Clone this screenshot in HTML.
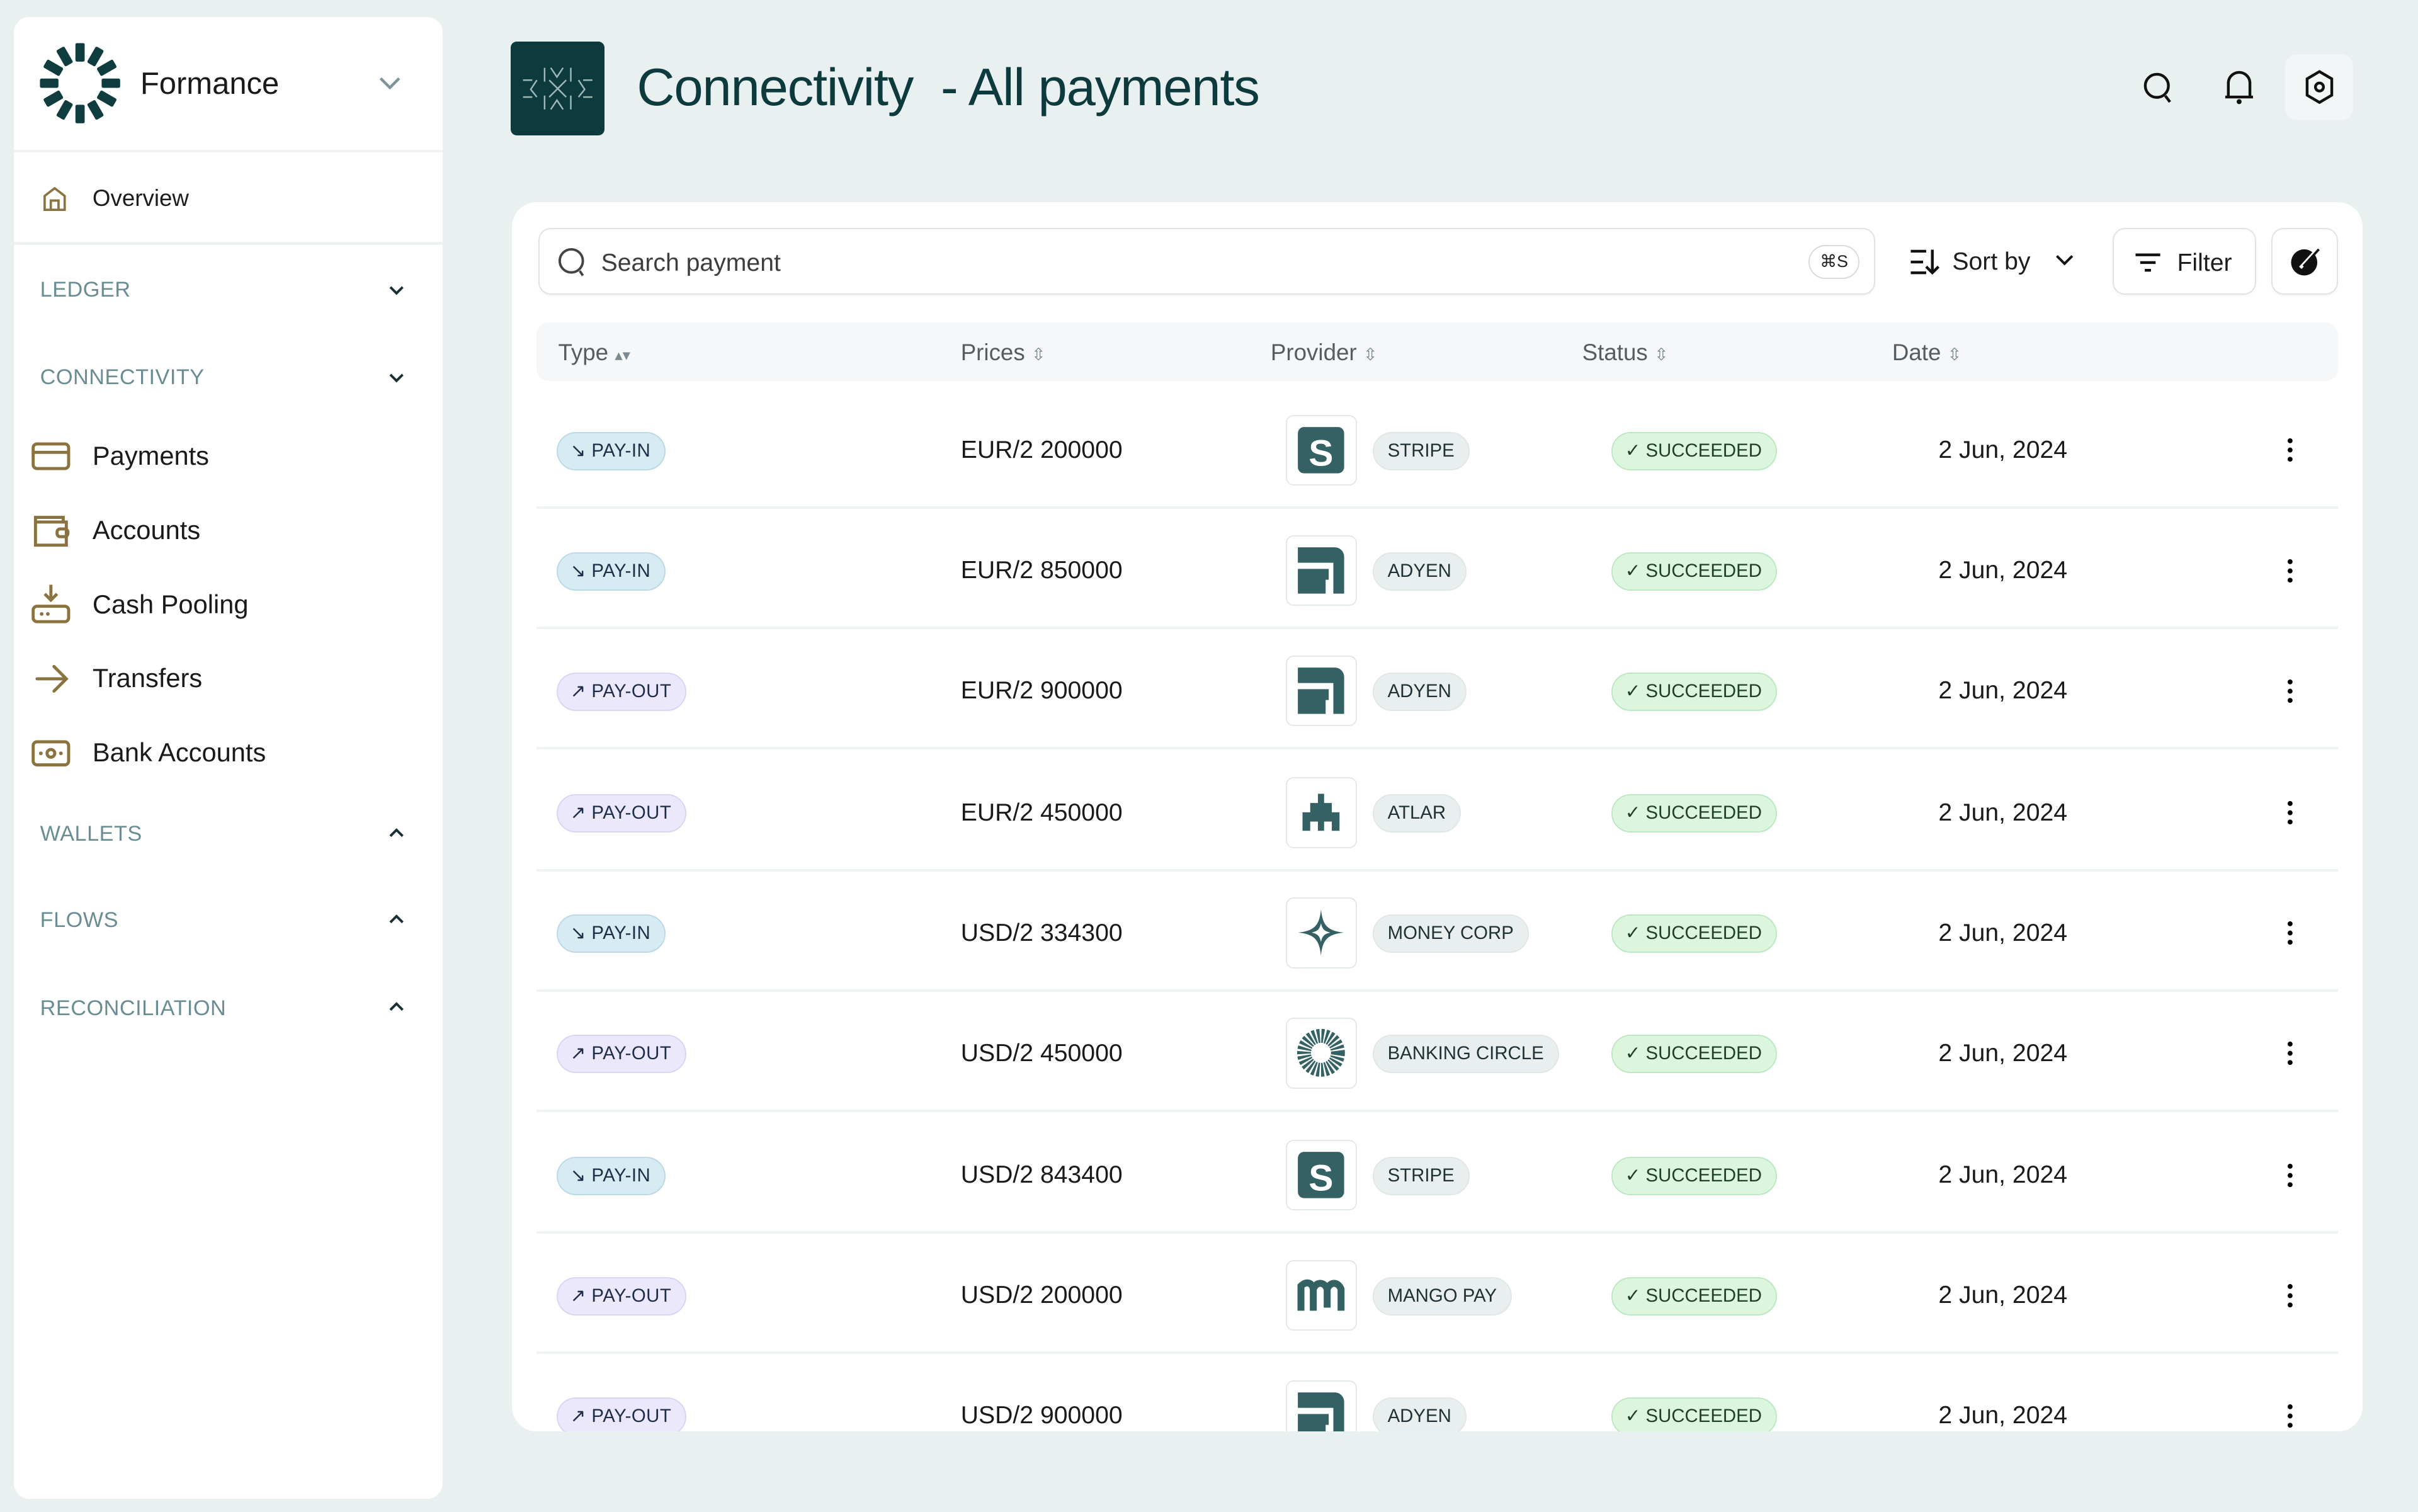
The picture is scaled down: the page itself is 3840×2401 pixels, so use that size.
<!DOCTYPE html>
<html><head><meta charset="utf-8"><style>
*{box-sizing:border-box;margin:0;padding:0}
html,body{width:3840px;height:2401px;overflow:hidden;background:#e8f0f0}
#z{zoom:2.44898;width:1568px;height:981px;position:relative;font-family:"Liberation Sans",sans-serif;color:#1d1d1f}
.a{position:absolute}
.side{left:9px;top:11px;width:278px;height:961px;background:#fff;border-radius:10px}
.hr{position:absolute;left:0;right:0;height:2px;background:#eef2f3}
.sec{position:absolute;left:17px;font-size:14px;color:#6a8d93;letter-spacing:.2px}
.chev{position:absolute;left:242px;width:12px;height:8px}
.item{position:absolute;left:51px;font-size:17px;color:#1a1a1a}
.ic{position:absolute;left:11px}
.card{left:332px;top:131px;width:1200px;height:797px;background:#fff;border-radius:16px;overflow:hidden}
.btn{position:absolute;border:1px solid #dde3e6;border-radius:8px;background:#fff;box-shadow:0 1px 2px rgba(0,0,0,.04)}
.th{position:absolute;top:11px;font-size:15px;color:#555d63}
.row{position:absolute;left:16px;width:1168px;height:78px;border-bottom:2px solid #f0f3f4}
.bdg{position:absolute;left:13px;top:28px;height:25px;border-radius:13px;font-size:12px;padding:0 9px 0 8px;line-height:23px;color:#1e2d48;letter-spacing:.2px}
.in{background:#d7ebf2;border:1px solid #bcd9e4}
.out{background:#ebe8fb;border:1px solid #dad5f3}
.pr{position:absolute;left:275px;top:31px;font-size:16px;color:#1a1a1a}
.lg{position:absolute;left:486px;top:17px;width:46px;height:46px;border:1px solid #e3e8ea;border-radius:5px;background:#fff}
.pv{position:absolute;left:542px;top:28px;height:25px;border-radius:13px;background:#e9efef;border:1px solid #e0e7e7;font-size:12px;line-height:23px;padding:0 9px;color:#1f3135}
.st{position:absolute;left:697px;top:28px;height:25px;border-radius:13px;background:#dcf6de;border:1px solid #bde9c2;font-size:12px;line-height:23px;padding:0 9px 0 8px;color:#1e3f28}
.dt{position:absolute;left:909px;top:31px;font-size:16px;color:#1a1a1a}
.dots{position:absolute;left:1135px;top:32px;width:4px;height:16px}
</style></head><body><div id="z">
<div class="a side">
 <svg class="a" style="left:16px;top:16px" width="54" height="54" viewBox="-27 -27 54 54">
  <g fill="#0f3d3f">
  <rect x="-3" y="-26" width="6" height="12" rx="1" transform="rotate(0)"/><rect x="-3" y="-26" width="6" height="12" rx="1" transform="rotate(30)"/><rect x="-3" y="-26" width="6" height="12" rx="1" transform="rotate(60)"/><rect x="-3" y="-26" width="6" height="12" rx="1" transform="rotate(90)"/><rect x="-3" y="-26" width="6" height="12" rx="1" transform="rotate(120)"/><rect x="-3" y="-26" width="6" height="12" rx="1" transform="rotate(150)"/><rect x="-3" y="-26" width="6" height="12" rx="1" transform="rotate(180)"/><rect x="-3" y="-26" width="6" height="12" rx="1" transform="rotate(210)"/><rect x="-3" y="-26" width="6" height="12" rx="1" transform="rotate(240)"/><rect x="-3" y="-26" width="6" height="12" rx="1" transform="rotate(270)"/><rect x="-3" y="-26" width="6" height="12" rx="1" transform="rotate(300)"/><rect x="-3" y="-26" width="6" height="12" rx="1" transform="rotate(330)"/>
  </g></svg>
 <div class="a" style="left:82px;top:32px;font-size:20px;color:#1a1a1a">Formance</div>
 <svg class="chev" style="top:39px;left:237px;width:14px;height:9px" viewBox="0 0 14 9"><path d="M1 1l6 6 6-6" fill="none" stroke="#7d9499" stroke-width="1.8"/></svg>
 <div class="hr" style="top:86px"></div>
 <svg class="ic" style="left:18px;top:109px" width="17" height="17" viewBox="0 0 17 17"><path d="M2 16V7l6.5-5L15 7v9zM6 16v-6h5v6" fill="none" stroke="#8b7340" stroke-width="1.5"/></svg>
 <div class="a" style="left:51px;top:109px;font-size:15px">Overview</div>
 <div class="hr" style="top:146px"></div>
 <div class="sec" style="top:169px">LEDGER</div>
 <svg class="chev" style="top:173px" viewBox="0 0 12 8"><path d="M2 2l4 4 4-4" fill="none" stroke="#1a2f33" stroke-width="1.6"/></svg>
 <div class="sec" style="top:226px">CONNECTIVITY</div>
 <svg class="chev" style="top:230px" viewBox="0 0 12 8"><path d="M2 2l4 4 4-4" fill="none" stroke="#1a2f33" stroke-width="1.6"/></svg>
 <svg class="ic" style="top:275px" width="26" height="20" viewBox="0 0 26 20"><rect x="1.5" y="2" width="23" height="16" rx="2.5" fill="none" stroke="#8b7340" stroke-width="2"/><path d="M1.5 7.5h23" stroke="#8b7340" stroke-width="2"/></svg>
 <div class="item" style="top:275px">Payments</div>
 <svg class="ic" style="top:321px" width="26" height="24" viewBox="0 0 26 24"><path d="M3 6V3.5h18v3M3 4v17.5h20V6.5H3" fill="none" stroke="#8b7340" stroke-width="2"/><rect x="17" y="11" width="7" height="5" rx="2" fill="none" stroke="#8b7340" stroke-width="2"/></svg>
 <div class="item" style="top:323px">Accounts</div>
 <svg class="ic" style="top:367px" width="26" height="28" viewBox="0 0 26 28"><path d="M13 1v10M9 7l4 4 4-4" fill="none" stroke="#8b7340" stroke-width="2"/><rect x="1.5" y="15" width="23" height="10" rx="2.5" fill="none" stroke="#8b7340" stroke-width="2"/><circle cx="7" cy="20" r="1.2" fill="#8b7340"/><circle cx="11" cy="20" r="1.2" fill="#8b7340"/></svg>
 <div class="item" style="top:371px">Cash Pooling</div>
 <svg class="ic" style="top:418px" width="26" height="22" viewBox="0 0 26 22"><path d="M4 11h19M15 3l8 8-8 8" fill="none" stroke="#8b7340" stroke-width="2" stroke-linecap="round"/></svg>
 <div class="item" style="top:419px">Transfers</div>
 <svg class="ic" style="top:468px" width="26" height="20" viewBox="0 0 26 20"><rect x="1.5" y="2" width="23" height="15" rx="2.5" fill="none" stroke="#8b7340" stroke-width="2"/><circle cx="13" cy="9.5" r="2.5" fill="none" stroke="#8b7340" stroke-width="2"/><circle cx="6.5" cy="9.5" r="1.2" fill="#8b7340"/><circle cx="19.5" cy="9.5" r="1.2" fill="#8b7340"/></svg>
 <div class="item" style="top:467px">Bank Accounts</div>
 <div class="sec" style="top:522px">WALLETS</div>
 <svg class="chev" style="top:525px" viewBox="0 0 12 8"><path d="M2 6l4-4 4 4" fill="none" stroke="#1a2f33" stroke-width="1.6"/></svg>
 <div class="sec" style="top:578px">FLOWS</div>
 <svg class="chev" style="top:581px" viewBox="0 0 12 8"><path d="M2 6l4-4 4 4" fill="none" stroke="#1a2f33" stroke-width="1.6"/></svg>
 <div class="sec" style="top:635px">RECONCILIATION</div>
 <svg class="chev" style="top:638px" viewBox="0 0 12 8"><path d="M2 6l4-4 4 4" fill="none" stroke="#1a2f33" stroke-width="1.6"/></svg>
</div>

<div class="a" style="left:331px;top:27px;width:61px;height:61px;background:#0d3a3d;border-radius:4px">
 <svg width="61" height="61" viewBox="0 0 61 61" fill="none" stroke="#9fb7b9" stroke-width="1"><path d="M22 17v9M39 17v9M22 35v9M39 35v9M26 17l4 6 4-6M26 44l4-6 4 6M8 25h6M8 36h6M47 25h6M47 36h6M17 25l-4 6 4 5M44 25l4 6-4 5M25 25l11 11M36 25L25 36"/></svg>
</div>
<div class="a" style="left:413px;top:37px;font-size:34px;color:#0d3a3d;letter-spacing:-.5px">Connectivity &nbsp;- All payments</div>

<svg class="a" style="left:1389px;top:46px" width="22" height="22" viewBox="0 0 22 22"><circle cx="9.5" cy="9.5" r="7.5" fill="none" stroke="#111" stroke-width="1.8"/><path d="M15 16l3 4" stroke="#111" stroke-width="1.8"/></svg>
<svg class="a" style="left:1441px;top:45px" width="22" height="24" viewBox="0 0 22 24"><path d="M4 18V9a7 7 0 0 1 14 0v9zM2 18h18" fill="none" stroke="#111" stroke-width="1.8"/><circle cx="11" cy="21" r="1.6" fill="#111"/></svg>
<div class="a" style="left:1482px;top:35px;width:44px;height:43px;background:#f3f6f6;border-radius:8px">
 <svg style="position:absolute;left:12px;top:10px" width="20" height="23" viewBox="0 0 20 23"><path d="M10 1.5l8 4.7v10.6l-8 4.7-8-4.7V6.2z" fill="none" stroke="#111" stroke-width="1.8"/><circle cx="10" cy="11.5" r="2.6" fill="none" stroke="#111" stroke-width="1.8"/></svg>
</div>

<div class="a card">
 <div class="btn" style="left:17px;top:17px;width:867px;height:43px">
  <svg style="position:absolute;left:11px;top:11px" width="22" height="22" viewBox="0 0 22 22"><circle cx="9.5" cy="9.5" r="7.5" fill="none" stroke="#444" stroke-width="1.6"/><path d="M15 16l2 3" stroke="#444" stroke-width="1.6"/></svg>
  <div style="position:absolute;left:40px;top:13px;font-size:16px;color:#3d3d3d">Search payment</div>
  <div style="position:absolute;left:823px;top:10px;width:33px;height:22px;border:1px solid #d6dcdf;border-radius:11px;font-size:11px;line-height:20px;text-align:center;color:#222">⌘S</div>
 </div>
 <svg class="a" style="left:906px;top:30px" width="20" height="18" viewBox="0 0 20 18"><path d="M1 2h10M1 9h8M1 16h10M15 1v15M11 12l4 4 4-4" fill="none" stroke="#111" stroke-width="1.8"/></svg>
 <div class="a" style="left:934px;top:30px;font-size:16px">Sort by</div>
 <svg class="a" style="left:1001px;top:34px" width="12" height="8" viewBox="0 0 12 8"><path d="M1 1l5 5 5-5" fill="none" stroke="#111" stroke-width="1.6"/></svg>
 <div class="btn" style="left:1038px;top:17px;width:93px;height:43px">
  <svg style="position:absolute;left:13px;top:15px" width="18" height="13" viewBox="0 0 18 13"><path d="M1 1.5h16M4 6.5h10M7 11.5h4" stroke="#111" stroke-width="1.8"/></svg>
  <div style="position:absolute;left:41px;top:13px;font-size:16px">Filter</div>
 </div>
 <div class="btn" style="left:1141px;top:17px;width:43px;height:43px">
  <svg style="position:absolute;left:11px;top:11px" width="20" height="20" viewBox="0 0 20 20"><circle cx="9.5" cy="10.5" r="8.5" fill="#111"/><path d="M7 14l11-12" stroke="#fff" stroke-width="2.2"/><path d="M9 13L19 2" stroke="#111" stroke-width="1.5"/></svg>
 </div>
 <div class="a" style="left:16px;top:78px;width:1168px;height:38px;background:#f5f7f8;border-radius:8px">
  <div class="th" style="left:14px">Type <span style="font-size:10px;color:#7a8a90">▴▾</span></div>
  <div class="th" style="left:275px">Prices <span style="font-size:11px;color:#7a8a90">⇳</span></div>
  <div class="th" style="left:476px">Provider <span style="font-size:11px;color:#7a8a90">⇳</span></div>
  <div class="th" style="left:678px">Status <span style="font-size:11px;color:#7a8a90">⇳</span></div>
  <div class="th" style="left:879px">Date <span style="font-size:11px;color:#7a8a90">⇳</span></div>
 </div>

 <div class="row" style="top:121px"><div class="bdg in">↘ PAY-IN</div><div class="pr">EUR/2 200000</div><div class="lg"><svg width="44" height="44" viewBox="0 0 44 44"><rect x="7" y="7" width="30" height="30" rx="4" fill="#346163"/><text x="22" y="32" font-size="24" font-weight="bold" fill="#fff" text-anchor="middle" font-family="Liberation Sans">S</text></svg></div><div class="pv">STRIPE</div><div class="st">✓ SUCCEEDED</div><div class="dt">2 Jun, 2024</div><svg class="dots" viewBox="0 0 4 16"><circle cx="2" cy="2" r="1.6"/><circle cx="2" cy="8" r="1.6"/><circle cx="2" cy="14" r="1.6"/></svg></div>
 <div class="row" style="top:199px"><div class="bdg in">↘ PAY-IN</div><div class="pr">EUR/2 850000</div><div class="lg"><svg width="44" height="44" viewBox="0 0 44 44"><path d="M7 7h24a6 6 0 0 1 6 6v24H30V17H7zM7 21h20v7h-2v9H7z" fill="#346163"/></svg></div><div class="pv">ADYEN</div><div class="st">✓ SUCCEEDED</div><div class="dt">2 Jun, 2024</div><svg class="dots" viewBox="0 0 4 16"><circle cx="2" cy="2" r="1.6"/><circle cx="2" cy="8" r="1.6"/><circle cx="2" cy="14" r="1.6"/></svg></div>
 <div class="row" style="top:277px"><div class="bdg out">↗ PAY-OUT</div><div class="pr">EUR/2 900000</div><div class="lg"><svg width="44" height="44" viewBox="0 0 44 44"><path d="M7 7h24a6 6 0 0 1 6 6v24H30V17H7zM7 21h20v7h-2v9H7z" fill="#346163"/></svg></div><div class="pv">ADYEN</div><div class="st">✓ SUCCEEDED</div><div class="dt">2 Jun, 2024</div><svg class="dots" viewBox="0 0 4 16"><circle cx="2" cy="2" r="1.6"/><circle cx="2" cy="8" r="1.6"/><circle cx="2" cy="14" r="1.6"/></svg></div>
 <div class="row" style="top:356px"><div class="bdg out">↗ PAY-OUT</div><div class="pr">EUR/2 450000</div><div class="lg"><svg width="44" height="44" viewBox="0 0 44 44"><path d="M20 10h4v6h5v6h5v12h-5v-6h-5v6h-4v-6h-5v6h-5V22h5v-6h5z" fill="#346163"/></svg></div><div class="pv">ATLAR</div><div class="st">✓ SUCCEEDED</div><div class="dt">2 Jun, 2024</div><svg class="dots" viewBox="0 0 4 16"><circle cx="2" cy="2" r="1.6"/><circle cx="2" cy="8" r="1.6"/><circle cx="2" cy="14" r="1.6"/></svg></div>
 <div class="row" style="top:434px"><div class="bdg in">↘ PAY-IN</div><div class="pr">USD/2 334300</div><div class="lg"><svg width="44" height="44" viewBox="0 0 44 44"><path d="M22 7C23 17 26 21 37 22 26 23 23 27 22 37 21 27 18 23 7 22 18 21 21 17 22 7zM22 16c-1 4-2 5-6 6 4 1 5 2 6 6 1-4 2-5 6-6-4-1-5-2-6-6z" fill="#346163" fill-rule="evenodd"/></svg></div><div class="pv">MONEY CORP</div><div class="st">✓ SUCCEEDED</div><div class="dt">2 Jun, 2024</div><svg class="dots" viewBox="0 0 4 16"><circle cx="2" cy="2" r="1.6"/><circle cx="2" cy="8" r="1.6"/><circle cx="2" cy="14" r="1.6"/></svg></div>
 <div class="row" style="top:512px"><div class="bdg out">↗ PAY-OUT</div><div class="pr">USD/2 450000</div><div class="lg"><svg width="44" height="44" viewBox="0 0 44 44"><circle cx="22" cy="22" r="11" fill="none" stroke="#346163" stroke-width="9" stroke-dasharray="1.6 1"/><circle cx="22" cy="22" r="5" fill="#fff"/></svg></div><div class="pv">BANKING CIRCLE</div><div class="st">✓ SUCCEEDED</div><div class="dt">2 Jun, 2024</div><svg class="dots" viewBox="0 0 4 16"><circle cx="2" cy="2" r="1.6"/><circle cx="2" cy="8" r="1.6"/><circle cx="2" cy="14" r="1.6"/></svg></div>
 <div class="row" style="top:591px"><div class="bdg in">↘ PAY-IN</div><div class="pr">USD/2 843400</div><div class="lg"><svg width="44" height="44" viewBox="0 0 44 44"><rect x="7" y="7" width="30" height="30" rx="4" fill="#346163"/><text x="22" y="32" font-size="24" font-weight="bold" fill="#fff" text-anchor="middle" font-family="Liberation Sans">S</text></svg></div><div class="pv">STRIPE</div><div class="st">✓ SUCCEEDED</div><div class="dt">2 Jun, 2024</div><svg class="dots" viewBox="0 0 4 16"><circle cx="2" cy="2" r="1.6"/><circle cx="2" cy="8" r="1.6"/><circle cx="2" cy="14" r="1.6"/></svg></div>
 <div class="row" style="top:669px"><div class="bdg out">↗ PAY-OUT</div><div class="pr">USD/2 200000</div><div class="lg"><svg width="44" height="44" viewBox="0 0 44 44"><path d="M9 32V16c3-3 7-3 8 2v14M17 30V18c2-5 7-5 9 0v12M26 30V18c2-5 7-5 9 0v14" fill="none" stroke="#346163" stroke-width="4.5"/></svg></div><div class="pv">MANGO PAY</div><div class="st">✓ SUCCEEDED</div><div class="dt">2 Jun, 2024</div><svg class="dots" viewBox="0 0 4 16"><circle cx="2" cy="2" r="1.6"/><circle cx="2" cy="8" r="1.6"/><circle cx="2" cy="14" r="1.6"/></svg></div>
 <div class="row" style="top:747px"><div class="bdg out">↗ PAY-OUT</div><div class="pr">USD/2 900000</div><div class="lg"><svg width="44" height="44" viewBox="0 0 44 44"><path d="M7 7h24a6 6 0 0 1 6 6v24H30V17H7zM7 21h20v7h-2v9H7z" fill="#346163"/></svg></div><div class="pv">ADYEN</div><div class="st">✓ SUCCEEDED</div><div class="dt">2 Jun, 2024</div><svg class="dots" viewBox="0 0 4 16"><circle cx="2" cy="2" r="1.6"/><circle cx="2" cy="8" r="1.6"/><circle cx="2" cy="14" r="1.6"/></svg></div>
</div>
</div></body></html>
